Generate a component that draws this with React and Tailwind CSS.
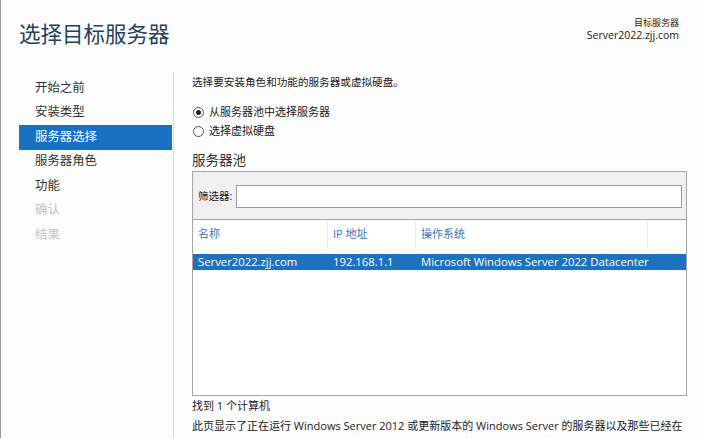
import React from "react";

const font = { fontFamily: '"Open Sans", "Noto Sans CJK SC", sans-serif' };

const steps = [
  { label: "开始之前", state: "done" },
  { label: "安装类型", state: "done" },
  { label: "服务器选择", state: "active" },
  { label: "服务器角色", state: "done" },
  { label: "功能", state: "done" },
  { label: "确认", state: "disabled" },
  { label: "结果", state: "disabled" },
];

function Radio({ checked, label }) {
  return (
    <label className="flex h-[19px] items-center gap-[5px] text-[11px] text-[#222]">
      <span className="flex h-[11px] w-[11px] items-center justify-center rounded-full border border-[#555] bg-white">
        {checked && <span className="h-[5px] w-[5px] rounded-full bg-[#222]" />}
      </span>
      {label}
    </label>
  );
}

export default function App() {
  return (
    <div
      style={font}
      className="flex h-[438px] w-[702px] flex-col overflow-hidden border-l border-[#9a9a9a] bg-[#fcfcfc]"
    >
      <div className="flex justify-between pl-[18px] pr-[23px]">
        <h1 className="pt-[18px] text-[21.5px] leading-[32px] font-normal text-[#26405f]">
          选择目标服务器
        </h1>
        <div className="pt-[16px] text-right leading-[13px] text-[#222]">
          <div className="text-[9px]">目标服务器</div>
          <div className="text-[10.5px]">Server2022.zjj.com</div>
        </div>
      </div>

      <div className="mt-[22px] flex min-h-0 flex-1">
        <nav className="w-[173px] shrink-0 border-r border-[#dcdcdc] pl-[18px] pt-[4px]">
          {steps.map((s) => (
            <div
              key={s.label}
              className={
                s.state === "active"
                  ? "flex h-[24.5px] w-[153px] items-center bg-[#1770c1] pl-[16px] text-[12.4px] text-white"
                  : s.state === "disabled"
                  ? "flex h-[24.5px] w-[153px] items-center pl-[16px] text-[12.4px] text-[#c4c4c4]"
                  : "flex h-[24.5px] w-[153px] items-center pl-[16px] text-[12.4px] text-[#333]"
              }
            >
              {s.label}
            </div>
          ))}
        </nav>

        <main className="flex min-w-0 flex-1 flex-col pl-[18px] pr-[15px]">
          <p className="text-[10.6px] leading-[20px] text-[#222]">
            选择要安装角色和功能的服务器或虚拟硬盘。
          </p>
          <div className="mt-[11px] flex flex-col pl-[1px]">
            <Radio checked label="从服务器池中选择服务器" />
            <Radio label="选择虚拟硬盘" />
          </div>
          <h2 className="mt-[9px] text-[13.5px] leading-[20px] text-[#333]">服务器池</h2>

          <div className="mt-[1px] flex h-[225px] shrink-0 flex-col border border-[#a6a6a6] bg-white">
            <div className="flex h-[48px] items-center gap-[4px] border-b border-[#a6a6a6] bg-[#f0f0f0] pl-[5px] pr-[4px] pt-[2px]">
              <span className="text-[10.5px] text-[#222]">筛选器:</span>
              <div className="h-[23px] flex-1 border border-[#9c9c9c] bg-white" />
            </div>
            <div className="flex h-[28px] items-center text-[11px] text-[#3a76b5]">
              <div className="flex h-full w-[135px] items-center border-r border-[#ececec] pl-[5px]">名称</div>
              <div className="flex h-full w-[88px] items-center border-r border-[#ececec] pl-[5px]">IP 地址</div>
              <div className="flex h-full w-[232px] items-center border-r border-[#ececec] pl-[5px]">操作系统</div>
            </div>
            <div className="mt-[6px] flex h-[16px] items-center bg-[#1c72bf] text-[11.3px] text-white">
              <div className="w-[135px] pl-[5px]">Server2022.zjj.com</div>
              <div className="w-[88px] pl-[5px]">192.168.1.1</div>
              <div className="pl-[5px]">Microsoft Windows Server 2022 Datacenter</div>
            </div>
          </div>

          <p className="mt-[1px] text-[11px] leading-[18px] text-[#222]">找到 1 个计算机</p>
          <p className="mt-[2px] text-[11px] leading-[18px] text-[#222]">
            此页显示了正在运行 Windows Server 2012 或更新版本的 Windows Server 的服务器以及那些已经在服务器管理器中使用“添加服务器”命令添加的服务器。脱机服务器和尚未完成数据收集的新添加的服务器将不会显示。
          </p>
        </main>
      </div>
    </div>
  );
}
